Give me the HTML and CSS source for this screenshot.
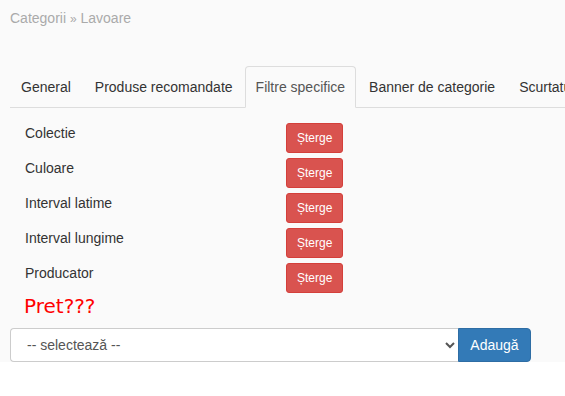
FILE: index.html
```html
<!DOCTYPE html>
<html lang="ro">
<head>
    <meta charset="UTF-8">
    <meta name="viewport" content="width=device-width, initial-scale=1.0">
    <title>Categorii - Lavoare</title>
    <link rel="stylesheet" href="styles.css">
</head>
<body>
    <div class="page">
        <div class="breadcrumb">Categorii <span class="sep">»</span> Lavoare</div>

        <ul class="nav-tabs">
            <li><a href="#">General</a></li>
            <li><a href="#">Produse recomandate</a></li>
            <li class="active"><a href="#">Filtre specifice</a></li>
            <li><a href="#">Banner de categorie</a></li>
            <li><a href="#">Scurtaturi</a></li>
        </ul>

        <div class="filters">
            <div class="filter-row">
                <span class="filter-name">Colectie</span>
                <button type="button" class="btn-delete">Șterge</button>
            </div>
            <div class="filter-row">
                <span class="filter-name">Culoare</span>
                <button type="button" class="btn-delete">Șterge</button>
            </div>
            <div class="filter-row">
                <span class="filter-name">Interval latime</span>
                <button type="button" class="btn-delete">Șterge</button>
            </div>
            <div class="filter-row">
                <span class="filter-name">Interval lungime</span>
                <button type="button" class="btn-delete">Șterge</button>
            </div>
            <div class="filter-row">
                <span class="filter-name">Producator</span>
                <button type="button" class="btn-delete">Șterge</button>
            </div>
            <div class="note">Pret???</div>
        </div>

        <div class="input-group">
            <select class="filter-select">
                <option>-- selectează --</option>
            </select>
            <button type="button" class="btn-add">Adaugă</button>
        </div>
    </div>
</body>
</html>
```

FILE: styles.css
```css
* {
    margin: 0;
    padding: 0;
    box-sizing: border-box;
}

body {
    background-color: #FFFFFF;
    font-family: 'Liberation Sans', Arial, sans-serif;
    font-size: 14px;
    line-height: 20px;
    color: #333333;
    overflow: hidden;
}

.page {
    background-color: #FAFAFA;
    padding: 8px 0 0 10px;
    height: 362px;
}

.breadcrumb {
    color: #AAAAAA;
    margin-bottom: 37px;
}

.breadcrumb .sep {
    font-size: 12px;
}

.nav-tabs {
    list-style: none;
    display: flex;
    white-space: nowrap;
    border-bottom: 1px solid #DDDDDD;
}

.nav-tabs li {
    margin-right: 2px;
    margin-bottom: -1px;
}

.nav-tabs li:nth-child(2) a {
    padding-right: 9px;
}

.nav-tabs a {
    display: block;
    padding: 10px 10px;
    border: 1px solid transparent;
    border-radius: 4px 4px 0 0;
    color: #333333;
    text-decoration: none;
}

.nav-tabs .active a {
    color: #555555;
    background-color: #FAFAFA;
    border-color: #DDDDDD;
    border-bottom-color: transparent;
}

.filters {
    padding: 15px 0 0 15px;
}

.filter-row {
    display: flex;
    align-items: flex-start;
    margin-bottom: 5px;
}

.filter-name {
    width: 261px;
}

.btn-delete {
    background-color: #D9534F;
    border: 1px solid #D43F3A;
    border-radius: 3px;
    color: #FFFFFF;
    font-family: 'Liberation Sans', Arial, sans-serif;
    font-size: 12px;
    line-height: 18px;
    padding: 5px 10px;
    cursor: pointer;
}

.note {
    font-family: 'DejaVu Sans', sans-serif;
    font-size: 20px;
    line-height: 20px;
    color: #FF0000;
    margin-top: -2px;
    margin-bottom: 12px;
    margin-left: -1px;
}

.input-group {
    display: flex;
    width: 521px;
}

.filter-select {
    flex: 1;
    height: 34px;
    padding: 6px 12px;
    border: 1px solid #CCCCCC;
    border-right: none;
    border-radius: 4px 0 0 4px;
    background-color: #FFFFFF;
    color: #555555;
    font-family: 'Liberation Sans', Arial, sans-serif;
    font-size: 14px;
}

.btn-add {
    width: 73px;
    background-color: #337AB7;
    border: 1px solid #2E6DA4;
    border-radius: 0 4px 4px 0;
    color: #FFFFFF;
    font-family: 'Liberation Sans', Arial, sans-serif;
    font-size: 14px;
    line-height: 20px;
    padding: 6px 0;
    cursor: pointer;
}
```
